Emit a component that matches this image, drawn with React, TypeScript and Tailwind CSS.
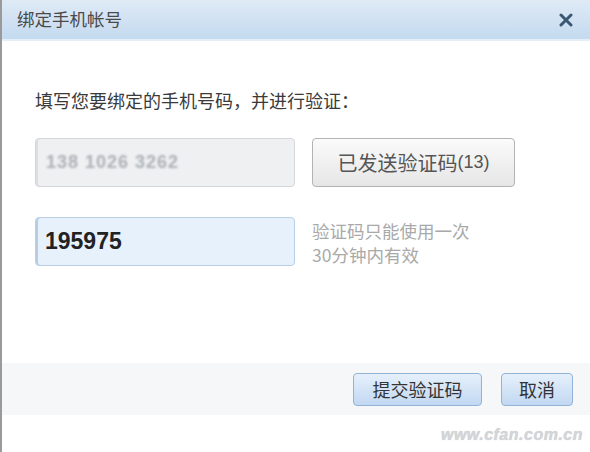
export default function App() {
  return (
    <div
      className="w-[590px] h-[452px] bg-white border-l-2 border-[#9a9a9a] flex flex-col overflow-hidden"
      style={{ fontFamily: '"Noto Sans CJK SC", "Liberation Sans", sans-serif' }}
    >
      <div className="h-[41px] shrink-0 flex items-center justify-between pl-[15px] pr-[13px] bg-gradient-to-b from-[#dfeaf6] to-[#c4daef] border-b-2 border-[#e3eef9]">
        <span className="text-[17.5px] text-[#4a4a4a]">绑定手机帐号</span>
        <svg width="14" height="14" viewBox="0 0 14 14" className="mr-[4px]">
          <path d="M2 2 L12 12 M12 2 L2 12" stroke="#3b5873" strokeWidth="3" strokeLinecap="round" />
        </svg>
      </div>

      <div className="flex-1 flex flex-col">
        <div className="pl-[33px] pt-[47px] text-[18px] text-[#3a3a3a] leading-[24px]">
          填写您要绑定的手机号码，并进行验证：
        </div>

        <div className="flex pl-[33px] mt-[26px] gap-[17px]">
          <div className="w-[260px] h-[49px] rounded-[4px] border border-[#d4d6d9] bg-[#eef0f2] flex items-center pl-[10px] shadow-[inset_2px_0_0_#dcdee1]">
            <span
              className="text-[18px] font-bold text-[#adb1b5] tracking-[1px] blur-[1.2px]"
              style={{ fontFamily: '"Liberation Sans", sans-serif' }}
            >
              138 1026 3262
            </span>
          </div>
          <button className="w-[203px] h-[49px] rounded-[4px] border border-[#b3b3b3] bg-gradient-to-b from-[#fbfbfb] to-[#e6e6e6] text-[20px] text-[#555] flex items-center justify-center">
            已发送验证码<span className="text-[18px]" style={{ fontFamily: '"Liberation Sans", sans-serif' }}>(13)</span>
          </button>
        </div>

        <div className="flex pl-[33px] mt-[30px] gap-[17px]">
          <div className="w-[260px] h-[49px] rounded-[4px] border border-[#b8cfe6] bg-[#e7f1fc] flex items-center pl-[9px] shadow-[inset_2px_0_0_#b8cde2]">
            <span
              className="text-[23px] font-bold text-[#222]"
              style={{ fontFamily: '"Liberation Sans", sans-serif' }}
            >
              195975
            </span>
          </div>
          <div className="pt-[2px] text-[17.5px] leading-[24px] text-[#a9a9a9]">
            <div>验证码只能使用一次</div>
            <div>30分钟内有效</div>
          </div>
        </div>

        <div className="mt-[96px] h-[52px] bg-[#f6f7f9] flex items-center justify-end pr-[17px] gap-[19px]">
          <button className="w-[129px] h-[33px] rounded-[4px] border border-[#93b3d6] bg-gradient-to-b from-[#e6f0fb] to-[#c2d8f2] text-[18px] text-[#333]">
            提交验证码
          </button>
          <button className="w-[72px] h-[33px] rounded-[4px] border border-[#93b3d6] bg-gradient-to-b from-[#e6f0fb] to-[#c2d8f2] text-[18px] text-[#333]">
            取消
          </button>
        </div>

        <div className="flex justify-end pr-[7px] pt-[8px]">
          <span
            className="italic font-bold text-[16px] text-[#d3d5d8] tracking-[0.5px]"
            style={{ fontFamily: '"Liberation Sans", sans-serif', textShadow: '0 0 1px #c4c6c9' }}
          >
            www.cfan.com.cn
          </span>
        </div>
      </div>
    </div>
  )
}
